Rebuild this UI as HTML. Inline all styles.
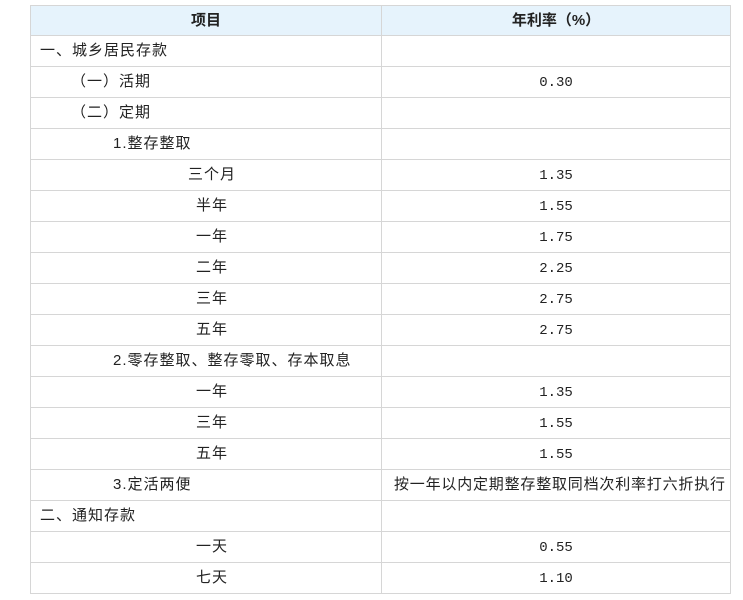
<!DOCTYPE html>
<html><head><meta charset="utf-8"><style>
body{margin:0;background:#fff;font-family:"Liberation Sans","Noto Sans CJK SC",sans-serif;font-size:15px;letter-spacing:1px;color:#222}
table{position:absolute;left:30px;top:5px;border-collapse:collapse;width:700px;table-layout:fixed}
td,th{border:1px solid #d6d6d6;height:30px;padding:0;white-space:nowrap;line-height:28px;vertical-align:middle}
th{background:#e6f3fc;font-weight:bold;height:29px;font-size:15px;letter-spacing:0}
td.n{text-align:center;font-family:"Liberation Mono","Noto Sans CJK SC",monospace;font-size:14px;letter-spacing:0;padding-top:2px;height:28px}
.c{text-align:center}
</style></head><body>
<table>
<col style="width:351px"><col style="width:349px">
<tr><th>项目</th><th>年利率（%）</th></tr>
<tr><td style="padding-left:9px">一、城乡居民存款</td><td></td></tr>
<tr><td style="padding-left:40px">（一）活期</td><td class="n">0.30</td></tr>
<tr><td style="padding-left:40px">（二）定期</td><td></td></tr>
<tr><td style="padding-left:82px">1.整存整取</td><td></td></tr>
<tr><td class="c" style="padding-left:12px">三个月</td><td class="n">1.35</td></tr>
<tr><td class="c" style="padding-left:12px">半年</td><td class="n">1.55</td></tr>
<tr><td class="c" style="padding-left:12px">一年</td><td class="n">1.75</td></tr>
<tr><td class="c" style="padding-left:12px">二年</td><td class="n">2.25</td></tr>
<tr><td class="c" style="padding-left:12px">三年</td><td class="n">2.75</td></tr>
<tr><td class="c" style="padding-left:12px">五年</td><td class="n">2.75</td></tr>
<tr><td style="padding-left:82px">2.零存整取、整存零取、存本取息</td><td></td></tr>
<tr><td class="c" style="padding-left:12px">一年</td><td class="n">1.35</td></tr>
<tr><td class="c" style="padding-left:12px">三年</td><td class="n">1.55</td></tr>
<tr><td class="c" style="padding-left:12px">五年</td><td class="n">1.55</td></tr>
<tr><td style="padding-left:82px">3.定活两便</td><td style="padding-left:12px;font-size:15px;letter-spacing:0.8px">按一年以内定期整存整取同档次利率打六折执行</td></tr>
<tr><td style="padding-left:9px">二、通知存款</td><td></td></tr>
<tr><td class="c" style="padding-left:12px">一天</td><td class="n">0.55</td></tr>
<tr><td class="c" style="padding-left:12px">七天</td><td class="n">1.10</td></tr>
</table>
</body></html>
